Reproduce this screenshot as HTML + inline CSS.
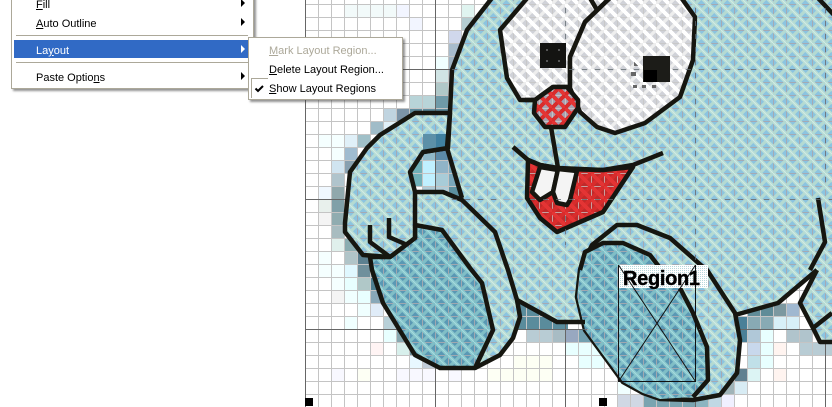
<!DOCTYPE html>
<html><head><meta charset="utf-8"><style>
html,body{margin:0;padding:0;background:#fff}
#w{position:relative;width:832px;height:407px;overflow:hidden;font:11px "Liberation Sans",sans-serif;color:#000}
svg{position:absolute;left:0;top:0}
.m{position:absolute;background:#fff;border:1px solid #aca899;box-sizing:border-box;box-shadow:2px 2px 2px rgba(60,60,60,.55)}
.t{position:absolute;white-space:nowrap;line-height:14px}
.a{position:absolute;width:0;height:0;border-left:4px solid #000;border-top:4px solid transparent;border-bottom:4px solid transparent}
.s{position:absolute;height:1px;background:#aca899}
u{text-decoration:underline}
</style></head><body><div id="w">
<svg width="832" height="407" viewBox="0 0 832 407">
<defs>
<pattern id="b" x="6" y="4" width="13" height="13" patternUnits="userSpaceOnUse"><g shape-rendering="crispEdges"><rect width="13" height="13" fill="#8cc4e0"/><path d="M.5 0V13M0 .5H13" stroke="#a4aab4" stroke-width="1"/><path d="M-2 15L15 -2" stroke="#b4dad2" stroke-width="3.2"/><path d="M-2 -2L15 15" stroke="#b8ddd5" stroke-width="3.6"/><path d="M-2 -2L15 15" stroke="#d0ebe4" stroke-width="1"/></g></pattern>
<pattern id="f" x="6" y="4" width="13" height="13" patternUnits="userSpaceOnUse"><g shape-rendering="crispEdges"><rect width="13" height="13" fill="#5a98b4"/><path d="M.5 0V13M0 .5H13" stroke="#a0a8b0" stroke-width="1"/><path d="M-2 15L15 -2" stroke="#80bec6" stroke-width="3.2"/><path d="M-2 -2L15 15" stroke="#88c6cc" stroke-width="3.6"/><path d="M-2 -2L15 15" stroke="#a4dade" stroke-width="1"/></g></pattern>
<pattern id="e" x="6" y="4" width="13" height="13" patternUnits="userSpaceOnUse"><g shape-rendering="crispEdges"><rect width="13" height="13" fill="#d0d2d8"/><path d="M.5 0V13M0 .5H13" stroke="#c8c8c8" stroke-width="1"/><path d="M-2 15L15 -2" stroke="#eeeeee" stroke-width="3.2"/><path d="M-2 -2L15 15" stroke="#ffffff" stroke-width="3.6"/></g></pattern>
<pattern id="r" x="6" y="4" width="13" height="13" patternUnits="userSpaceOnUse"><g shape-rendering="crispEdges"><rect width="13" height="13" fill="#a8a0b0"/><path d="M.5 0V13M0 .5H13" stroke="#c4c4c4" stroke-width="1"/><path d="M-2 15L15 -2" stroke="#d82c2c" stroke-width="3.6"/><path d="M-2 -2L15 15" stroke="#e43434" stroke-width="3.6"/></g></pattern>
<pattern id="m" x="6" y="4" width="13" height="13" patternUnits="userSpaceOnUse"><g shape-rendering="crispEdges"><rect width="13" height="13" fill="#c02a2a"/><path d="M.5 0V13M0 .5H13" stroke="#c8a0a0" stroke-width="1"/><path d="M-2 15L15 -2" stroke="#d82c2c" stroke-width="3.6"/><path d="M-2 -2L15 15" stroke="#e43434" stroke-width="3.6"/></g></pattern>
<pattern id="g" x="6" y="4" width="13" height="13" patternUnits="userSpaceOnUse"><path d="M.5 0V13M0 .5H13" stroke="#c4c4c4" stroke-width="1" fill="none" shape-rendering="crispEdges"/></pattern>
<pattern id="d" width="2" height="2" patternUnits="userSpaceOnUse"><rect width="2" height="2" fill="#fff"/><rect width="1" height="1" fill="#b8d8dc"/></pattern>
</defs>
<g shape-rendering="crispEdges">
<rect x="306" width="526" height="407" fill="#fff"/>
<g>
<path fill="#f2fafa" d="M344 4h52v13h-52z"/>
<path fill="#e0f4f0" d="M461 4h13v13h-13z"/>
<path fill="#f2f5ff" d="M396 4h13v13h-13zM409 17h13v13h-13z"/>
<path fill="#b4ccd0" d="M461 17h13v13h-13z"/>
<path fill="#d0d8ec" d="M448 30h13v13h-13z"/>
<path fill="#a8bccc" d="M448 43h13v13h-13z"/>
<path fill="#a0b4c4" d="M448 56h13v30h-13z"/>
<path fill="#f0ffff" d="M435 56h13v13h-13z"/>
<path fill="#d0e4e4" d="M435 69h13v13h-13z"/>
<path fill="#b0c8c8" d="M435 82h13v13h-13z"/>
<path fill="#6f9aa8" d="M435 95h15v13h-15z"/>
<path fill="#b8d4d8" d="M409 95h26v13h-26z"/>
<path fill="#7c94a8" d="M396 108h13v13h-13z"/>
<path fill="#5c8a9c" d="M409 108h41v13h-41z"/>
<path fill="#c0d4e0" d="M383 108h13v13h-13z"/>
<path fill="#a0bcc8" d="M370 121h13v13h-13z"/>
<path fill="#e0f0f8" d="M383 121h13v13h-13zM344 134h13v13h-13z"/>
<path fill="#f5ffff" d="M318 134h26v13h-26zM331 147h13v13h-13zM331 264h13v26h-13zM318 251h13v26h-13z"/>
<path fill="#a0c0c8" d="M357 134h13v13h-13z"/>
<path fill="#a0bcd0" d="M344 147h13v13h-13z"/>
<path fill="#d0e4f0" d="M331 160h13v13h-13z"/>
<path fill="#88a0b0" d="M344 160h13v13h-13z"/>
<path fill="#b0c4cc" d="M331 173h13v13h-13z"/>
<path fill="#90a8ac" d="M331 186h13v13h-13z"/>
<path fill="#f0f8ff" d="M318 186h13v13h-13z"/>
<path fill="#e8f0ec" d="M318 199h13v13h-13z"/>
<path fill="#80a0a8" d="M331 199h13v13h-13z"/>
<path fill="#f4f4f4" d="M318 212h13v13h-13z"/>
<path fill="#90acb0" d="M331 212h13v13h-13z"/>
<path fill="#a8bcc0" d="M331 225h13v13h-13z"/>
<path fill="#e0f0ec" d="M331 238h13v13h-13z"/>
<path fill="#8aacb0" d="M344 238h13v13h-13z"/>
<path fill="#b0c4c8" d="M344 251h13v13h-13z"/>
<path fill="#5c8090" d="M357 251h13v13h-13z"/>
<path fill="#e0f8ff" d="M344 264h13v13h-13z"/>
<path fill="#70909c" d="M357 264h15v13h-15z"/>
<path fill="#b0c8c8" d="M357 277h13v13h-13z"/>
<path fill="#4f7f90" d="M370 277h10v13h-10z"/>
<path fill="#e8ffff" d="M344 277h13v13h-13zM357 290h13v13h-13zM383 329h13v13h-13z"/>
<path fill="#88a8b8" d="M370 290h12v13h-12z"/>
<path fill="#f4f4f4" d="M331 290h13v13h-13z"/>
<path fill="#f0ffff" d="M344 290h13v13h-13zM357 303h13v13h-13zM344 316h13v13h-13z"/>
<path fill="#e0ecf8" d="M370 303h14v13h-14z"/>
<path fill="#b8d0d8" d="M383 316h13v13h-13z"/>
<path fill="#88a8b0" d="M396 329h13v13h-13z"/>
<path fill="#70909c" d="M409 342h13v13h-13z"/>
<path fill="#d8f0ec" d="M396 342h13v13h-13z"/>
<path fill="#fff4f4" d="M370 342h13v13h-13z"/>
<path fill="#e8f8ff" d="M409 355h13v13h-13z"/>
<path fill="#c0ccd8" d="M422 355h13v13h-13z"/>
<path fill="#f8f8ff" d="M331 368h13v13h-13zM396 368h39v13h-39zM448 368h13v13h-13z"/>
<path fill="#fdfff4" d="M357 368h13v13h-13zM487 368h65v13h-65zM513 355h39v13h-39z"/>
<path fill="#5a8c9c" d="M518 303h50v26h-50z"/>
<path fill="#b8ccd4" d="M526 329h26v13h-26z"/>
<path fill="#a8bcc4" d="M552 329h13v13h-13z"/>
<path fill="#98a8c0" d="M565 329h13v13h-13z"/>
<path fill="#70a0b0" d="M578 329h13v13h-13z"/>
<path fill="#e8ffff" d="M565 342h39v13h-39zM578 355h26v13h-26z"/>
<path fill="#f0ffff" d="M617 381h13v13h-13z"/>
<path fill="#d0d8e4" d="M617 394h26v13h-26z"/>
<path fill="#7aa4b0" d="M643 394h60v13h-60z"/>
<path fill="#8cb4c0" d="M696 394h13v13h-13z"/>
<path fill="#c0d8e4" d="M709 394h13v13h-13z"/>
<path fill="#f0f0ff" d="M722 394h13v13h-13z"/>
<path fill="#a0b4b8" d="M722 381h13v13h-13z"/>
<path fill="#d8ecf4" d="M735 381h13v13h-13z"/>
<path fill="#608090" d="M730 368h18v13h-18z"/>
<path fill="#dcf4f4" d="M748 368h13v13h-13z"/>
<path fill="#c0e0e8" d="M748 355h13v13h-13z"/>
<path fill="#c8d8ec" d="M748 342h13v13h-13z"/>
<path fill="#e8ffff" d="M761 342h13v26h-13zM761 329h13v13h-13z"/>
<path fill="#b0c8d8" d="M748 329h13v13h-13z"/>
<path fill="#4a8098" d="M735 316h13v26h-13z"/>
<path fill="#88aab4" d="M748 316h26v13h-26z"/>
<path fill="#d8f0f8" d="M774 316h26v13h-26z"/>
<path fill="#608c98" d="M748 303h26v13h-26z"/>
<path fill="#7c98a0" d="M774 303h13v13h-13z"/>
<path fill="#a0b8d0" d="M787 303h13v13h-13z"/>
<path fill="#b0c4cc" d="M787 329h26v13h-26z"/>
<path fill="#b8ccd4" d="M800 342h32v13h-32z"/>
<path fill="#fff4f0" d="M774 342h13v13h-13zM774 368h13v13h-13z"/>
<!-- hollow between arm and body -->
<path fill="#70b0b8" d="M409 147h13v39h-13z"/>
<path fill="#90b8c8" d="M422 147h13v13h-13z"/>
<path fill="#c0f0ff" d="M422 160h13v26h-13z"/>
<path fill="#b0ccd8" d="M422 186h26v13h-26z"/>
<path fill="#5c8aa8" d="M435 147h13v13h-13z"/>
<path fill="#90b4c8" d="M435 160h13v13h-13z"/>
<path fill="#a8ccd8" d="M435 173h13v13h-13z"/>
<path fill="#7aa8bc" d="M448 147h13v39h-13z"/>
<path fill="#5c90a0" d="M448 186h13v13h-13z"/>
</g>
<rect x="306" width="526" height="407" fill="url(#g)"/>
<path d="M305.5 0V407M435.5 0V407M565.5 0V407M695.5 0V407M825.5 0V407M306 69.5H832M306 199.5H832M306 329.5H832" stroke="#666" stroke-width="1" fill="none"/>
</g>
<g stroke="#161610" stroke-width="4.5" stroke-linejoin="round" stroke-linecap="butt">
<!-- body -->
<path fill="url(#b)" stroke="none" d="M492 -2L467 30L452 70L450 112L447 148L462 198L495 232L508 270L517 300L557 322L583 322L600 330L735 315L778 303L817 270L832 270V-2Z"/>
<path fill="url(#b)" stroke="none" d="M800 303L817 270L832 270V342L820 342L813 328Z"/>
<!-- leg -->
<path fill="url(#b)" d="M415 192L443 192L462 200L495 232L508 270L517 300L520 317L513 338L500 355L475 368L493 330L482 283L470 268L442 230L417 225Z" stroke="none"/>
<!-- back foot -->
<path fill="url(#f)" d="M370 257L390 257L415 238L415 225L442 230L470 268L482 283L493 330L475 368L440 368L415 355L383 303L372 270Z"/>
<!-- arm -->
<path fill="url(#b)" d="M415 113L450 113L448 148L423 152L410 172L415 192L415 238L390 257L363 255L345 232L345 223L350 172L367 148L380 135Z"/>
<path fill="#5c90a8" stroke="none" d="M423 134h13v15l-13 2z"/>
<path fill="#4080a0" stroke="none" d="M436 134h11v13l-11 2z"/>
<path fill="none" d="M492 -2L467 30L452 70L450 112L447 148L462 198M423 152L448 148M415 192L443 192L462 200L495 232L508 270L517 300L520 317L513 338L500 355L475 368M370 225V242L390 257M389 218V237L405 244"/>
<!-- right foot -->
<path fill="url(#b)" d="M580 270L592 245L617 225L637 225L670 238L703 267L707 270L735 313L740 340L737 373L720 395L693 400L660 399L643 393L623 382L585 330L577 297Z"/>
<path fill="url(#f)" stroke="none" d="M580 270L585 252L603 243L623 243L650 255L660 268L680 288L693 313L707 347L708 380L693 397L660 399L643 393L623 382L585 330L577 297Z"/>
<path fill="none" d="M580 270L585 252L603 243L623 243L650 255L660 268M680 288L693 313L707 347L708 380L693 397"/>
<path fill="none" d="M517 300L557 322L585 322M735 315L778 303L817 270M817 270L800 303L813 328L820 342H832M813 328L832 313M818 198L825 242L810 270"/>
<!-- eyes -->
<path fill="url(#e)" d="M529 -4L500 30L507 78L520 100L535 100L553 87L567 87L570 88L570 57L585 22L612 -4Z"/>
<path fill="url(#e)" d="M585 22L570 57L570 88L580 112L597 127L615 133L645 123L680 97L693 60L695 17L680 -4L612 -4Z"/>
<path fill="none" d="M590 -2L597 10"/>
<path fill="none" d="M818 -2L834 15"/>
<!-- mouth -->
<path fill="url(#m)" d="M528 160L527 198L540 218L557 232L603 212L633 167L603 170L558 168L540 165Z"/>
<path fill="#f4f4f4" d="M540 167L532 192L540 200L553 192L558 170Z"/>
<path fill="#f4f4f4" d="M553 192L557 203L567 205L570 200L577 171L558 169Z"/>
<path fill="none" d="M513 147L528 160L540 165L560 169L603 170L633 165L663 153M551 127L558 168"/>
<!-- nose -->
<path fill="url(#r)" d="M535 100L553 87L567 87L578 100L578 108L565 127L545 127L534 113Z"/>
<path fill="none" d="M525 100H535"/>
</g>
<path d="M452 199.5H500M530 199.5H832M582 329.5H700M452 69.5H500M569 69.5H832M565.5 8V43M565.5 216V245M695.5 8V260M825.5 8V190" stroke="#5f6a70" stroke-width="1" stroke-dasharray="5 8" fill="none" shape-rendering="crispEdges" opacity=".75"/>
<g shape-rendering="crispEdges">
<rect x="540" y="43" width="26" height="25" fill="#141412"/>
<path d="M546 49h2v2h-2zM558 49h2v2h-2zM546 60h2v2h-2zM558 60h2v2h-2z" fill="#555"/>
<rect x="643" y="56" width="27" height="26" fill="#1c1c18"/>
<rect x="644" y="70" width="13" height="12" fill="#000"/>
<path d="M634 62l4 4h-4zM631 72h5v4h-5zM633 85h4v3h-4zM642 85h4v3h-4zM652 85h4v3h-4z" fill="#666"/>
<rect x="305" y="398" width="8" height="8" fill="#000"/>
<rect x="599" y="398" width="8" height="8" fill="#000"/>
<rect x="618" y="265" width="90" height="23" fill="url(#d)"/>
</g>
<path d="M618.5 265V381.5H695.5V265M618.5 381.5L695.5 265M695.5 381.5L618.5 265" fill="none" stroke="#111" stroke-width="1"/>
<text x="623" y="285" font-family="Liberation Sans" font-weight="bold" font-size="20" textLength="77" lengthAdjust="spacing" fill="#000" stroke="#000" stroke-width=".4">Region1</text>
</svg>
<div class="m" style="left:11px;top:-40px;width:243px;height:129px"></div>
<div class="t" style="left:36px;top:-2px"><u>F</u>ill</div>
<div class="a" style="left:241px;top:-1px"></div>
<div class="t" style="left:36px;top:17px"><u>A</u>uto Outline</div>
<div class="a" style="left:241px;top:18px"></div>
<div class="s" style="left:16px;top:35px;width:232px"></div>
<div style="position:absolute;left:14px;top:40px;width:234px;height:18px;background:#316ac5"></div>
<div class="t" style="left:36px;top:44px;color:#fff">La<u>y</u>out</div>
<div class="a" style="left:241px;top:45px;border-left-color:#fff"></div>
<div class="s" style="left:16px;top:62px;width:232px"></div>
<div class="t" style="left:36px;top:71px">Paste Optio<u>n</u>s</div>
<div class="a" style="left:241px;top:72px"></div>
<div class="m" style="left:248px;top:37px;width:155px;height:63px"></div>
<div class="t" style="left:269px;top:44px;color:#aca899"><u>M</u>ark Layout Region...</div>
<div class="t" style="left:269px;top:63px"><u>D</u>elete Layout Region...</div>
<div class="t" style="left:269px;top:82px"><u>S</u>how Layout Regions</div>
<div style="position:absolute;left:251px;top:78px;width:16px;height:19px;border-left:1px solid #aca899;border-top:1px solid #aca899"></div>
<svg style="left:254px;top:84px" width="12" height="10" viewBox="0 0 12 10"><path d="M1.5 4.5L4 7L9 2" fill="none" stroke="#000" stroke-width="2"/></svg>
</div></body></html>
